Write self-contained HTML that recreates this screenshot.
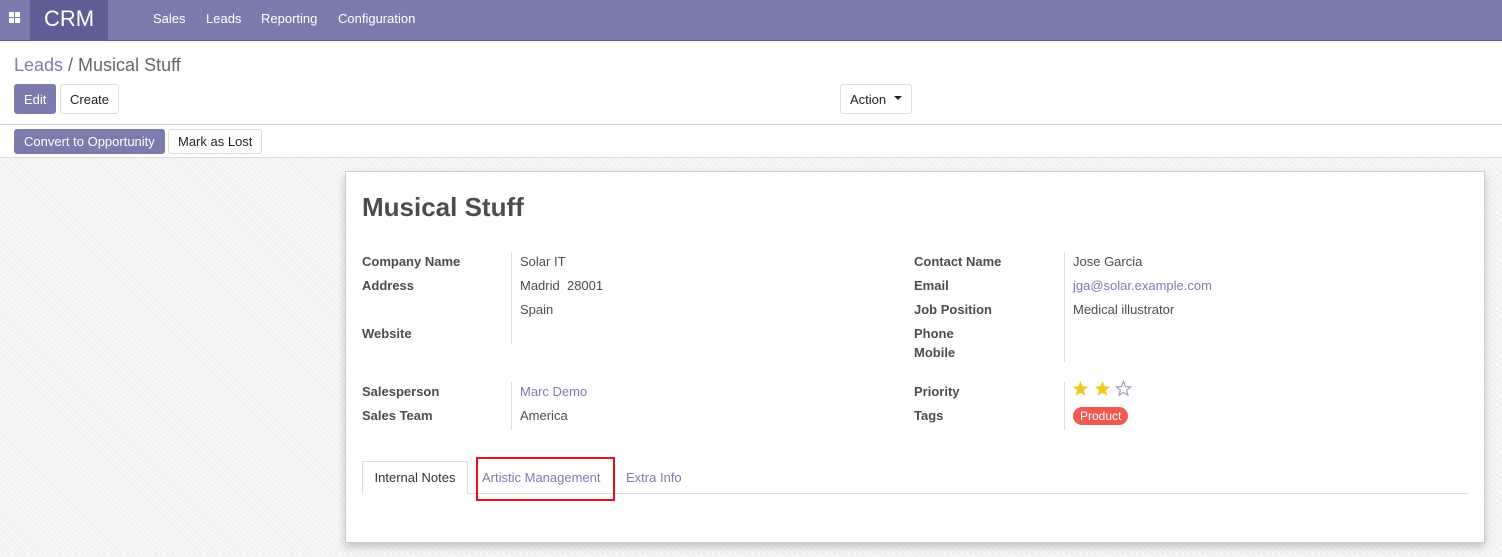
<!DOCTYPE html>
<html><head><style>
*{box-sizing:border-box;margin:0;padding:0}
body{width:1502px;height:557px;overflow:hidden;font-family:"Liberation Sans",sans-serif;font-size:13px;color:#4c4c4c;background:#fff;position:relative}
.nav{position:absolute;left:0;top:0;width:1502px;height:41px;background:#7c7bad;border-bottom:1px solid #5e5c8e}
.brand{position:absolute;left:30px;top:0;width:78px;height:41px;background:#5f5e97;color:#fff;font-size:22px;text-align:center;line-height:38px}
.menu a{position:absolute;top:11px;color:#fff;font-size:13px}
.grid{position:absolute;left:9px;top:12px;width:12px;height:12px}
.grid i{position:absolute;width:5px;height:5px;background:#fff}
.abs{position:absolute}
.btn{position:absolute;height:30px;line-height:29px;padding:0 9px;border:1px solid #ddd;border-radius:3px;font-size:13px;color:#222;background:#fff}
.btnp{background:#7c7bad;color:#fff;border-color:#7c7bad}
.bg{position:absolute;left:0;top:157px;width:1502px;height:400px;background:#f6f6f6;background-image:repeating-linear-gradient(45deg,#eee 0 1px,transparent 1px 4px)}
.sheet{position:absolute;left:345px;top:171px;width:1140px;height:372px;background:#fff;border:1px solid #ccc;box-shadow:0 4px 8px rgba(0,0,0,.2)}
.lbl{position:absolute;font-weight:bold;color:#4c4c4c}
.val{position:absolute;color:#4c4c4c}
.lnk{color:#7c7bad}
.vl{position:absolute;width:1px;background:#ddd}
</style></head><body>
<div class="nav">
<div class="grid"><i style="left:0;top:0"></i><i style="left:6px;top:0"></i><i style="left:0;top:6px"></i><i style="left:6px;top:6px"></i></div>
<div class="brand">CRM</div>
<div class="menu"><a style="left:153px">Sales</a><a style="left:206px">Leads</a><a style="left:261px">Reporting</a><a style="left:338px">Configuration</a></div>
</div>
<div class="abs" style="left:14px;top:55px;font-size:18px;color:#666"><span style="color:#7c7bad">Leads</span> / Musical Stuff</div>
<div class="btn btnp" style="left:14px;top:84px">Edit</div>
<div class="btn" style="left:60px;top:84px">Create</div>
<div class="btn" style="left:840px;top:84px;width:72px">Action <span style="display:inline-block;vertical-align:middle;margin-left:4px;border-left:4px solid transparent;border-right:4px solid transparent;border-top:4px solid #222;position:relative;top:-3px"></span></div>
<div class="abs" style="left:0;top:124px;width:1502px;height:1px;background:#ccc"></div>
<div class="btn btnp" style="left:14px;top:129px;height:25px;line-height:23px">Convert to Opportunity</div>
<div class="btn" style="left:168px;top:129px;height:25px;line-height:23px">Mark as Lost</div>
<div class="bg"></div>
<div class="abs" style="left:0;top:157px;width:1502px;height:1px;background:#ddd"></div>
<div class="sheet"></div>
<div class="abs" style="left:362px;top:192px;font-size:26px;font-weight:bold;color:#4c4c4c">Musical Stuff</div>
<div class="lbl" style="left:362px;top:254px">Company Name</div>
<div class="lbl" style="left:362px;top:278px">Address</div>
<div class="lbl" style="left:362px;top:326px">Website</div>
<div class="vl" style="left:511px;top:252px;height:92px"></div>
<div class="val" style="left:520px;top:254px">Solar IT</div>
<div class="val" style="left:520px;top:278px">Madrid&nbsp; 28001</div>
<div class="val" style="left:520px;top:302px">Spain</div>
<div class="lbl" style="left:914px;top:254px">Contact Name</div>
<div class="lbl" style="left:914px;top:278px">Email</div>
<div class="lbl" style="left:914px;top:302px">Job Position</div>
<div class="lbl" style="left:914px;top:326px">Phone</div>
<div class="lbl" style="left:914px;top:345px">Mobile</div>
<div class="vl" style="left:1064px;top:252px;height:110px"></div>
<div class="val" style="left:1073px;top:254px">Jose Garcia</div>
<div class="val lnk" style="left:1073px;top:278px">jga@solar.example.com</div>
<div class="val" style="left:1073px;top:302px">Medical illustrator</div>
<div class="lbl" style="left:362px;top:384px">Salesperson</div>
<div class="lbl" style="left:362px;top:408px">Sales Team</div>
<div class="vl" style="left:511px;top:382px;height:48px"></div>
<div class="val lnk" style="left:520px;top:384px">Marc Demo</div>
<div class="val" style="left:520px;top:408px">America</div>
<div class="lbl" style="left:914px;top:384px">Priority</div>
<div class="lbl" style="left:914px;top:408px">Tags</div>
<div class="vl" style="left:1064px;top:382px;height:48px"></div>
<svg class="abs" style="left:1072px;top:380px" width="62" height="18" viewBox="0 0 62 18">
<g id="s"><path d="M8.5 1 L10.6 6.2 L16.2 6.6 L11.9 10.2 L13.3 15.7 L8.5 12.7 L3.7 15.7 L5.1 10.2 L0.8 6.6 L6.4 6.2 Z" fill="#f3c81e"/></g>
<path transform="translate(22 0)" d="M8.5 1 L10.6 6.2 L16.2 6.6 L11.9 10.2 L13.3 15.7 L8.5 12.7 L3.7 15.7 L5.1 10.2 L0.8 6.6 L6.4 6.2 Z" fill="#f3c81e"/>
<path transform="translate(43 0)" d="M8.5 1.5 L10.5 6.5 L15.6 6.9 L11.6 10.2 L12.9 15.2 L8.5 12.4 L4.1 15.2 L5.4 10.2 L1.4 6.9 L6.5 6.5 Z" fill="none" stroke="#9aa0b8" stroke-width="1.2"/>
</svg>
<div class="abs" style="left:1073px;top:407px;height:18px;line-height:18px;padding:0 7px;border-radius:9px;background:#f05a50;color:#fff;font-size:12px">Product</div>
<div class="abs" style="left:362px;top:493px;width:1106px;height:1px;background:#ddd"></div>
<div class="abs" style="left:362px;top:461px;width:106px;height:33px;border:1px solid #ddd;border-bottom:1px solid #fff;background:#fff;line-height:31px;text-align:center;color:#333">Internal Notes</div>
<div class="abs lnk" style="left:482px;top:470px">Artistic Management</div>
<div class="abs" style="left:476px;top:457px;width:139px;height:44px;border:2px solid #e8101e"></div>
<div class="abs lnk" style="left:626px;top:470px">Extra Info</div>
</body></html>
